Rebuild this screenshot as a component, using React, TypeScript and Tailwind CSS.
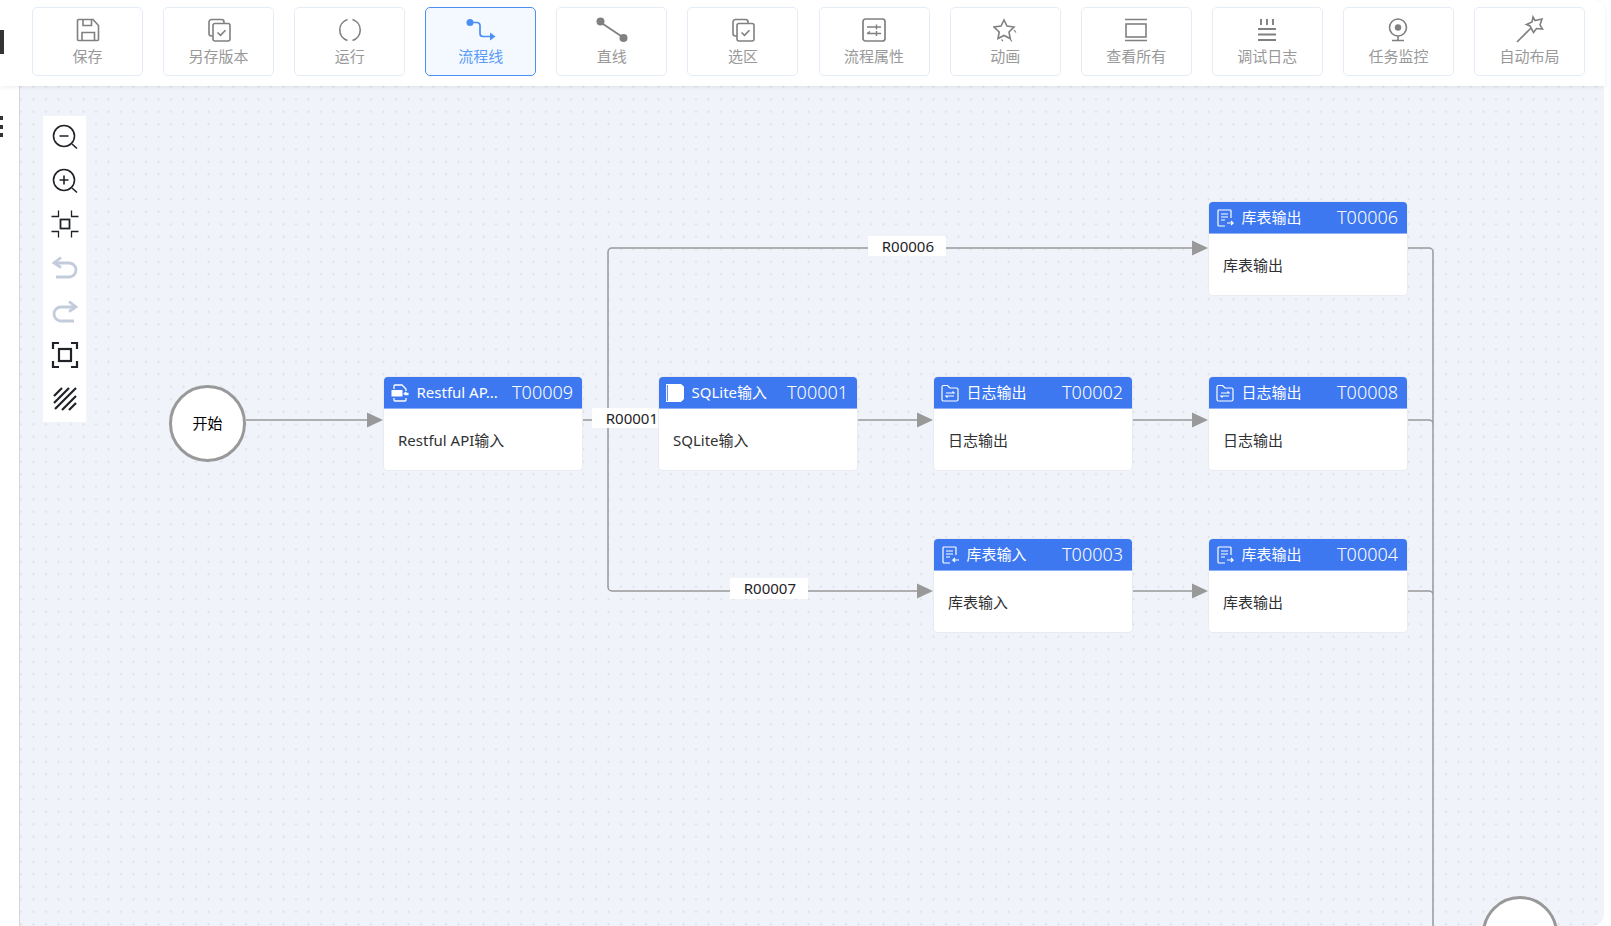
import type { ReactNode } from "react";

// toolbar icons, mostly drawn on a 24 box
const SaveIcon = () => (
  <svg viewBox="0 0 24 24" className="w-6 h-6" fill="none" stroke="currentColor" strokeWidth="1.600">
    <path d="M1.500 2.500a1 1 0 0 1 1-1h14.500l5.500 6v14a1 1 0 0 1-1 1h-19a1 1 0 0 1-1-1z" />
    <path d="M7 1.500v6h8.500v-6M6 22.500v-8h12.500v8" />
  </svg>
);

const CopyCheckIcon = () => (
  <svg viewBox="0 0 24 24" className="w-6 h-6" fill="none" stroke="currentColor" strokeWidth="1.600">
    <path d="M6 18H4.500A2.500 2.500 0 0 1 2 15.500V4a2.500 2.500 0 0 1 2.500-2.500h10A2.500 2.500 0 0 1 17 4v1.500" />
    <rect x="6" y="5.500" width="17" height="17.500" rx="2" />
    <path d="M10.500 14.500l3 2.800 5-5" />
  </svg>
);

const RunIcon = () => (
  <svg viewBox="0 0 24 24" className="w-6 h-6" fill="none" stroke="currentColor" strokeWidth="1.600">
    <path d="M9.500 1.500a11 11 0 0 0 0 21M14.500 1.500a11 11 0 0 1 0 21" />
  </svg>
);

const FlowIcon = () => (
  <svg viewBox="0 0 30 24" className="w-[30px] h-6" fill="none" stroke="currentColor" strokeWidth="1.700">
    <circle cx="4" cy="4.500" r="3.500" fill="currentColor" stroke="none" />
    <path d="M5 4.500h6a3 3 0 0 1 3 3v8a3 3 0 0 0 3 3h9" />
    <path d="M24 14.500l5.500 4-5.500 4z" fill="currentColor" stroke="none" />
  </svg>
);

const LineIcon = () => (
  <svg viewBox="0 0 32 26" className="w-8 h-[26px]" fill="none" stroke="currentColor" strokeWidth="1.700">
    <path d="M4 5l24 16" />
    <circle cx="4.500" cy="4.500" r="4" fill="currentColor" stroke="none" />
    <circle cx="27.500" cy="21" r="4" fill="currentColor" stroke="none" />
  </svg>
);

const PropsIcon = () => (
  <svg viewBox="0 0 24 24" className="w-6 h-6" fill="none" stroke="currentColor" strokeWidth="1.700">
    <rect x="1" y="1" width="22" height="22" rx="2.500" />
    <path d="M5 9h14M14.500 6.500v5" strokeWidth="1.400" />
    <path d="M5 15.500h14M14.500 13v5M5 15.500l3-2" strokeWidth="1.400" />
  </svg>
);

const StarIcon = () => (
  <svg viewBox="0 0 24 24" className="w-6 h-6" fill="none" stroke="currentColor" strokeWidth="1.600">
    <path d="M11 2l3 6 7 1-5 5 1.200 6.500L11 17.500 5 20.500 6.200 14 1 9l7-1z" />
    <path d="M21 12l2 2.500M8.500 21.500l1.500 1.500M17 21l2 2.500" strokeWidth="1.200" />
  </svg>
);

const ViewIcon = () => (
  <svg viewBox="0 0 24 24" className="w-6 h-6" fill="none" stroke="currentColor" strokeWidth="1.600">
    <path d="M1 1.500h22M1 22.500h22" />
    <rect x="2" y="6" width="20" height="13" />
  </svg>
);

const LogIcon = () => (
  <svg viewBox="0 0 24 24" className="w-6 h-6" fill="none" stroke="currentColor" strokeWidth="1.900">
    <path d="M6 1v6M12 1v6M18 1v6" />
    <path d="M3 11h18M3 16.500h18M3 22h18" />
  </svg>
);

const MonitorIcon = () => (
  <svg viewBox="0 0 24 24" className="w-6 h-6" fill="none" stroke="currentColor" strokeWidth="1.600">
    <circle cx="12" cy="9.500" r="8.500" />
    <circle cx="12" cy="9.500" r="3.200" fill="currentColor" stroke="none" />
    <path d="M12 18v4M6 22.500h12" />
  </svg>
);

const WandIcon = () => (
  <svg viewBox="0 0 28 28" className="w-7 h-7 -mt-[3px] -mb-px" fill="none" stroke="currentColor" strokeWidth="1.600">
    <path d="M1 27l14-14" />
    <path d="M17 2l2 3.500 7-1.500-2 6 2.500 4-6-.5-3 4-3.500-6.500-3.500-1.500 5.500-2.500z" />
  </svg>
);

// left tool strip icons
const ZoomOutIcon = () => (
  <svg viewBox="0 0 28 28" className="w-7 h-7" fill="none" stroke="#1f2329" strokeWidth="1.600">
    <circle cx="13" cy="13" r="10.500" />
    <path d="M8.500 13h9M21 21l5 4.500" />
  </svg>
);

const ZoomInIcon = () => (
  <svg viewBox="0 0 28 28" className="w-7 h-7" fill="none" stroke="#1f2329" strokeWidth="1.600">
    <circle cx="13" cy="13" r="10.500" />
    <path d="M8.500 13h9M13 8.500v9M21 21l5 4.500" />
  </svg>
);

const FitIcon = () => (
  <svg viewBox="0 0 28 28" className="w-7 h-7" fill="none" stroke="#1f2329">
    <rect x="9.500" y="9.500" width="9" height="9" strokeWidth="1.800" />
    <path d="M.5 6.500h7v-6M27.500 6.500h-7v-6M.5 21.500h7v6M27.500 21.500h-7v6" strokeWidth="1.300" />
  </svg>
);

const UndoIcon = () => (
  <svg viewBox="0 0 28 28" className="w-7 h-7" fill="none" stroke="#c3ccdc" strokeWidth="2.800">
    <path d="M4 9h14a6.500 6.500 0 0 1 0 14H5" />
    <path d="M10 3.500L3 9l7 4.500" />
  </svg>
);

const RedoIcon = () => (
  <svg viewBox="0 0 28 28" className="w-7 h-7" fill="none" stroke="#c3ccdc" strokeWidth="2.800">
    <path d="M24 9H10a6.500 6.500 0 0 0 0 14h13" />
    <path d="M18 3.500L25 9l-7 4.500" />
  </svg>
);

const FullIcon = () => (
  <svg viewBox="0 0 28 28" className="w-7 h-7" fill="none" stroke="#1f2329" strokeWidth="2.200">
    <rect x="8" y="8" width="12" height="12" />
    <path d="M2 8V2h6M26 8V2h-6M2 20v6h6M26 20v6h-6" />
  </svg>
);

const HatchIcon = () => (
  <svg viewBox="0 0 28 28" className="w-7 h-7" fill="none" stroke="#1f2329" strokeWidth="2.200">
    <path d="M3 11l8-8M3 18L18 3M4 24L25 3M11 25L25 11M18 25l7-7" />
  </svg>
);

// white icons inside the blue node headers
const ApiIcon = () => (
  <svg viewBox="0 0 18 18" className="w-[18px] h-[18px]" fill="none" stroke="white" strokeWidth="1.300">
    <path d="M3 5V2a1 1 0 0 1 1-1h7l4 4v2M15 14v2a1 1 0 0 1-1 1H4a1 1 0 0 1-1-1v-2" />
    <rect x="0.500" y="6" width="11" height="6.500" fill="white" stroke="none" />
    <path d="M17.500 9.500h-4l1.500-1.500M13.500 10.500h4" />
  </svg>
);

const SqliteIcon = () => (
  <svg viewBox="0 0 18 18" className="w-[18px] h-[18px]">
    <path d="M0 0h15l3 2.500v12.500l-3 3H0z" fill="white" />
    <path d="M1.400 1v16" stroke="#3d78f0" strokeWidth="0.900" />
  </svg>
);

const LogFolderIcon = () => (
  <svg viewBox="0 0 18 18" className="w-[18px] h-[18px]" fill="none" stroke="white" strokeWidth="1.200">
    <path d="M1 3a1.500 1.500 0 0 1 1.500-1.500h4L9 4h6.500A1.500 1.500 0 0 1 17 5.500v10a1.500 1.500 0 0 1-1.500 1.500h-13A1.500 1.500 0 0 1 1 15.500z" />
    <path d="M5 9h8L11.500 7.500M13 12H5l1.500 1.500" />
  </svg>
);

const TableIcon = ({ input }: { input?: boolean }) => (
  <svg viewBox="0 0 18 18" className="w-[18px] h-[18px]" fill="none" stroke="white" strokeWidth="1.200">
    <path d="M15 9V2a1 1 0 0 0-1-1H3a1 1 0 0 0-1 1v14a1 1 0 0 0 1 1h6" />
    <path d="M5 5h7M5 8h7M5 11h4" />
    {input ? <path d="M18 14h-6l2-2M12 14l2 2" /> : <path d="M11 14h6l-2-2M17 14l-2 2" />}
  </svg>
);

const tools = [
  { label: "保存", icon: <SaveIcon /> },
  { label: "另存版本", icon: <CopyCheckIcon /> },
  { label: "运行", icon: <RunIcon /> },
  { label: "流程线", icon: <FlowIcon />, active: true },
  { label: "直线", icon: <LineIcon /> },
  { label: "选区", icon: <CopyCheckIcon /> },
  { label: "流程属性", icon: <PropsIcon /> },
  { label: "动画", icon: <StarIcon /> },
  { label: "查看所有", icon: <ViewIcon /> },
  { label: "调试日志", icon: <LogIcon /> },
  { label: "任务监控", icon: <MonitorIcon /> },
  { label: "自动布局", icon: <WandIcon /> },
];

const sideTools = [
  <ZoomOutIcon key="out" />,
  <ZoomInIcon key="in" />,
  <FitIcon key="fit" />,
  <UndoIcon key="undo" />,
  <RedoIcon key="redo" />,
  <FullIcon key="full" />,
  <HatchIcon key="hatch" />,
];

const nodes: { pos: string; icon: ReactNode; title: string; id: string; body: string }[] = [
  { pos: "left-[364px] top-[291px]", icon: <ApiIcon />, title: "Restful AP...", id: "T00009", body: "Restful API输入" },
  { pos: "left-[639px] top-[291px]", icon: <SqliteIcon />, title: "SQLite输入", id: "T00001", body: "SQLite输入" },
  { pos: "left-[914px] top-[291px]", icon: <LogFolderIcon />, title: "日志输出", id: "T00002", body: "日志输出" },
  { pos: "left-[1189px] top-[291px]", icon: <LogFolderIcon />, title: "日志输出", id: "T00008", body: "日志输出" },
  { pos: "left-[1189px] top-[116px]", icon: <TableIcon />, title: "库表输出", id: "T00006", body: "库表输出" },
  { pos: "left-[914px] top-[453px]", icon: <TableIcon input />, title: "库表输入", id: "T00003", body: "库表输入" },
  { pos: "left-[1189px] top-[453px]", icon: <TableIcon />, title: "库表输出", id: "T00004", body: "库表输出" },
];

const labels = [
  { pos: "left-[572px] top-[322px] w-[66px] h-[20px]", text: "R00001" },
  { pos: "left-[848px] top-[150px] w-[78px] h-[20px]", text: "R00006" },
  { pos: "left-[710px] top-[492px] w-[78px] h-[21px]", text: "R00007" },
];

const lines = [
  [246, 420, 369],
  [858, 420, 918],
  [1132, 420, 1193],
  [1132, 591, 1193],
];

function Arrow({ x, y }: { x: number; y: number }) {
  return <path d={`M${x} ${y - 7.5}L${x + 16} ${y}L${x} ${y + 7.5}z`} fill="#999999" />;
}

function FlowNode({ pos, icon, title, id, body }: (typeof nodes)[number]) {
  return (
    <div className={`absolute ${pos} w-[198px] h-[93px] flex flex-col rounded bg-white shadow-[0_0_0_1px_#e9ebf1] overflow-hidden`}>
      <div className="h-[32px] shrink-0 flex items-center bg-[#3d78f0] border-b border-[#8fb0f6] pl-[7px] pr-[9px] text-white">
        <span className="w-[18px] h-[18px] shrink-0">{icon}</span>
        <span className="ml-[7.500px] text-[15px]">{title}</span>
        <span className="ml-auto text-[18px] font-light">{id}</span>
      </div>
      <div className="flex-1 flex items-center pl-[14px] pt-[1px] text-[15px] text-[#303133]">{body}</div>
    </div>
  );
}

export default function App() {
  return (
    <div className="w-[1611px] h-[926px] flex flex-col overflow-hidden bg-white font-['Noto_Sans','Noto_Sans_CJK_SC',sans-serif]">
      {/* Top toolbar */}
      <div className="w-[1605px] h-[86px] shrink-0 flex rounded-tr-xl bg-white shadow-[0_1px_4px_rgba(0,0,0,0.08)] relative z-10">
        <div className="w-[32px] pt-[30px]">
          <div className="w-[4px] h-[24px] bg-[#333333]" />
        </div>
        <div className="flex gap-[20.100px] pt-[7px]">
          {tools.map((t) => (
            <button
              key={t.label}
              className={`w-[111px] h-[69px] flex flex-col items-center pt-[10px] rounded-[5px] border text-[15px] leading-[20px] ${
                t.active
                  ? "border-[#4d8ff5] bg-[#f4f9ff] text-[#5b9bf8]"
                  : "border-[#e4ecf7] bg-white text-[#999999]"
              }`}
            >
              <span className={`h-6 flex items-center ${t.active ? "text-[#4a8ff6]" : "text-[#808080]"}`}>{t.icon}</span>
              <span className="mt-[4px]">{t.label}</span>
            </button>
          ))}
        </div>
      </div>

      <div className="flex-1 flex w-[1604px]">
        {/* Collapsed side panel */}
        <div className="w-[19px] shrink-0 flex flex-col gap-[4.500px] pt-[30px]">
          <div className="w-[3px] h-[4px] bg-[#333333]" />
          <div className="w-[3px] h-[4px] bg-[#333333]" />
          <div className="w-[3px] h-[4px] bg-[#333333]" />
        </div>

        {/* Canvas */}
        <div className="relative flex-1 overflow-hidden rounded-br-xl border-l border-[#d5d7dd] bg-[#f0f3fa] bg-[radial-gradient(circle,#dcdfe6_0.8px,transparent_1.3px)] bg-[length:12.5px_12.5px] bg-[position:-5.250px_-5.500px]">
          <svg viewBox="20 86 1584 840" className="absolute inset-0 w-[1584px] h-[840px]" fill="none">
            <g stroke="#999999" strokeWidth="1.500">
              {lines.map(([x1, y, x2]) => (
                <path key={`${x1}-${y}`} d={`M${x1} ${y}H${x2}`} />
              ))}
              <path d="M582 420H608M1192 248H612a4 4 0 0 0-4 4V587a4 4 0 0 0 4 4H918" />
              <path d="M1407 248h22a4 4 0 0 1 4 4V926M1407 420h22a4 4 0 0 1 4 4M1407 591h22a4 4 0 0 1 4 4" />
            </g>
            <Arrow x={367} y={420} />
            <Arrow x={917} y={420} />
            <Arrow x={1192} y={420} />
            <Arrow x={1192} y={248} />
            <Arrow x={917} y={591} />
            <Arrow x={1192} y={591} />
          </svg>

          {/* Zoom / history tools */}
          <div className="absolute left-[23px] top-[30px] w-[43px] h-[306px] flex flex-col items-center gap-[15.700px] py-[7px] bg-white">
            {sideTools}
          </div>

          {labels.map((l) => (
            <div key={l.text} className={`absolute ${l.pos} flex items-center justify-end bg-white text-[15px] text-[#1f2329]`}>
              <span className={l.text === "R00001" ? "" : "mr-[12px]"}>{l.text}</span>
            </div>
          ))}

          <div className="absolute left-[149px] top-[299px] w-[77px] h-[77px] flex items-center justify-center rounded-full border-[3px] border-[#999999] bg-white text-[15px] text-black">
            开始
          </div>
          <div className="absolute left-[1462px] top-[810px] w-[76px] h-[76px] rounded-full border-[3px] border-[#999999] bg-white" />

          {nodes.map((n) => (
            <FlowNode key={n.id} {...n} />
          ))}
        </div>
      </div>
    </div>
  );
}
